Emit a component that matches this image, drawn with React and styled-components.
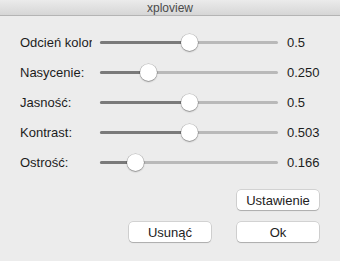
import React from "react";
import styled, { createGlobalStyle } from "styled-components";

const Global = createGlobalStyle`
  html, body { margin: 0; padding: 0; background: #ececec; }
  body { font-family: "Liberation Sans", Arial, sans-serif; }
`;

const Window = styled.div`
  width: 340px;
  height: 261px;
  background: #ececec;
  display: flex;
  flex-direction: column;
  overflow: hidden;
`;

const TitleBar = styled.div`
  height: 15px;
  border-bottom: 1px solid #b4b4b4;
  background: linear-gradient(#ebebeb, #d6d6d6);
  display: flex;
  align-items: center;
  justify-content: center;
  font-size: 12px;
  color: #4a4a4a;
`;

const Content = styled.div`
  padding: 11px 0 0 20px;
  display: flex;
  flex-direction: column;
`;

const Row = styled.div`
  display: grid;
  grid-template-columns: 80px 178px auto;
  align-items: center;
  height: 30px;
  font-size: 13px;
  color: #1c1c1c;
`;

const Label = styled.div`
  overflow: hidden;
  white-space: nowrap;
  width: 72px;
`;

const Track = styled.div`
  position: relative;
  height: 3px;
  border-radius: 2px;
  background: #b9b9b9;
`;

const Fill = styled.div`
  position: absolute;
  left: 0;
  top: 0;
  bottom: 0;
  border-radius: 2px;
  background: #7a7a7a;
`;

const Thumb = styled.div`
  position: absolute;
  top: 50%;
  width: 17px;
  height: 17px;
  margin-top: -8.5px;
  border-radius: 50%;
  background: #ffffff;
  box-shadow: 0 0 0 0.5px rgba(0, 0, 0, 0.25), 0 1px 1.5px rgba(0, 0, 0, 0.3);
`;

const Value = styled.div`
  white-space: nowrap;
  padding-left: 9px;
`;

const Buttons = styled.div`
  display: flex;
  flex-direction: column;
  align-items: flex-end;
  gap: 12px;
  padding: 13px 21px 0 0;
`;

const ButtonRow = styled.div`
  display: flex;
  gap: 26px;
`;

const Button = styled.button`
  width: 82px;
  height: 20px;
  padding: 0;
  border: none;
  border-radius: 4px;
  background: #ffffff;
  box-shadow: 0 0 0 0.5px rgba(0, 0, 0, 0.22), 0 1px 1px rgba(0, 0, 0, 0.18);
  font-family: "Liberation Sans", Arial, sans-serif;
  font-size: 13px;
  color: #222;
`;

const rows = [
  { label: "Odcień kolor", value: 0.5, text: "0.5" },
  { label: "Nasycenie:", value: 0.25, text: "0.250" },
  { label: "Jasność:", value: 0.5, text: "0.5" },
  { label: "Kontrast:", value: 0.503, text: "0.503" },
  { label: "Ostrość:", value: 0.166, text: "0.166" },
];

function Slider({ value }) {
  const thumbLeft = value * (178 - 17);
  return (
    <Track>
      <Fill style={{ width: thumbLeft + 8 }} />
      <Thumb style={{ left: thumbLeft }} />
    </Track>
  );
}

export default function App() {
  return (
    <Window>
      <Global />
      <TitleBar>xploview</TitleBar>
      <Content>
        {rows.map((r) => (
          <Row key={r.label}>
            <Label>{r.label}</Label>
            <Slider value={r.value} />
            <Value>{r.text}</Value>
          </Row>
        ))}
      </Content>
      <Buttons>
        <Button>Ustawienie</Button>
        <ButtonRow>
          <Button>Usunąć</Button>
          <Button>Ok</Button>
        </ButtonRow>
      </Buttons>
    </Window>
  );
}
